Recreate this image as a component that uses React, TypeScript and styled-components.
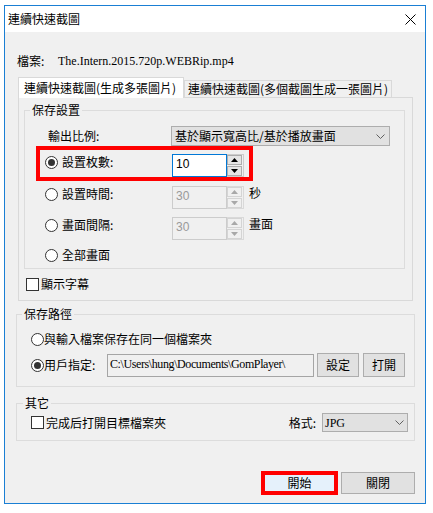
import React from 'react';
import styled, { createGlobalStyle } from 'styled-components';

const CJK = `"Noto Sans CJK TC", "Noto Sans", sans-serif`;
const SERIF = `"Liberation Serif", "Noto Sans CJK TC", serif`;
const SANS = `"Liberation Sans", "Noto Sans CJK TC", sans-serif`;

const Global = createGlobalStyle`
  html, body { margin: 0; padding: 0; background: #ffffff; }
  body { font-family: ${CJK}; font-size: 12px; color: #000; }
  * { box-sizing: border-box; }
`;

const Window = styled.div`
  margin: 5px 0 0 4px;
  width: 422px;
  height: 499px;
  border: 1px solid #1a7fd4;
  display: flex;
  flex-direction: column;
  background: #f0f0f0;
`;

const TitleBar = styled.div`
  height: 26px;
  flex: none;
  background: #ffffff;
  display: flex;
  align-items: center;
  justify-content: space-between;
  padding: 0 9px 0 3px;
`;

const TitleText = styled.span`
  font-size: 12px;
  line-height: 16px;
  color: #000;
`;

const Body = styled.div`
  flex: 1;
  display: flex;
  flex-direction: column;
  padding: 21px 0 9px 0;
`;

const FileRow = styled.div`
  display: flex;
  height: 16px;
  line-height: 16px;
  margin-left: 12px;
`;

const FileLabel = styled.span`
  width: 41px;
`;

const SerifText = styled.span`
  font-family: ${SERIF};
  font-size: 12px;
`;

const TabStrip = styled.div`
  display: flex;
  align-items: flex-end;
  height: 20px;
  margin: 8px 0 0 13px;
  position: relative;
  z-index: 1;
`;

const Tab = styled.div<{ $active?: boolean }>`
  height: ${p => (p.$active ? 21 : 17)}px;
  width: ${p => (p.$active ? 166 : 208)}px;
  margin-bottom: ${p => (p.$active ? -1 : 0)}px;
  border: 1px solid #d9d9d9;
  border-bottom: none;
  background: ${p => (p.$active ? '#ffffff' : '#f0f0f0')};
  padding-left: ${p => (p.$active ? 5 : 3)}px;
  line-height: ${p => (p.$active ? 19 : 15)}px;
  white-space: nowrap;
`;

const Panel = styled.div`
  margin-left: 13px;
  width: 395px;
  height: 204px;
  border: 1px solid #d9d9d9;
  display: flex;
  flex-direction: column;
`;

const Group = styled.fieldset<{ $w: number; $mt: number; $ml: number; $pb: number }>`
  margin: ${p => p.$mt}px 0 0 ${p => p.$ml}px;
  width: ${p => p.$w}px;
  padding: 0 0 ${p => p.$pb}px 0;
  border: 1px solid #dcdcdc;
  min-width: 0;
`;

const Legend = styled.legend<{ $ml: number }>`
  margin-left: ${p => p.$ml}px;
  padding: 0 2px;
  line-height: 16px;
  height: 16px;
  font-size: 12px;
`;

const RatioRow = styled.div`
  display: flex;
  align-items: center;
  height: 20px;
  margin-top: 8px;
  padding-left: 23px;
`;

const RatioLabel = styled.span`
  width: 123px;
  line-height: 16px;
`;

const Combo = styled.div<{ $w: number; $h: number; $pl: number; $pr: number }>`
  width: ${p => p.$w}px;
  height: ${p => p.$h}px;
  border: 1px solid #adadad;
  background: #e1e1e1;
  display: flex;
  align-items: center;
  justify-content: space-between;
  padding: 0 ${p => p.$pr}px 0 ${p => p.$pl}px;
  line-height: 16px;
  white-space: nowrap;
`;

const RadioRow = styled.div<{ $mt: number; $h: number; $hl?: boolean }>`
  display: flex;
  align-items: flex-start;
  width: 209px;
  height: ${p => p.$h}px;
  margin: ${p => p.$mt}px 0 0 15px;
  padding: ${p => (p.$hl ? 4 : 0)}px 0 0 5px;
  outline: ${p => (p.$hl ? '4px solid #ff0000' : 'none')};
  white-space: nowrap;
`;

const RadioLabel = styled.label<{ $w?: number; $gap: number }>`
  display: flex;
  align-items: center;
  height: 16px;
  gap: ${p => p.$gap}px;
  width: ${p => (p.$w ? `${p.$w}px` : 'auto')};
  flex: none;
  line-height: 16px;
`;

const RadioCircle = styled.span<{ $on?: boolean }>`
  width: 13px;
  height: 13px;
  border-radius: 50%;
  border: 1px solid #333333;
  background: #ffffff;
  display: flex;
  align-items: center;
  justify-content: center;
  flex: none;
  &::after {
    content: '';
    width: 7px;
    height: 7px;
    border-radius: 50%;
    background: ${p => (p.$on ? '#333333' : 'transparent')};
  }
`;

const CheckBox = styled.span`
  width: 13px;
  height: 13px;
  border: 1px solid #333333;
  background: #ffffff;
  flex: none;
`;

const Spinner = styled.div`
  display: flex;
  width: 72px;
  height: 23px;
  flex: none;
`;

const SpinInput = styled.div<{ $focus?: boolean }>`
  flex: 1;
  border: 1px solid ${p => (p.$focus ? '#0078d7' : '#cccccc')};
  background: ${p => (p.$focus ? '#ffffff' : '#f0f0f0')};
  color: ${p => (p.$focus ? '#000000' : '#9a9a9a')};
  font-family: ${SANS};
  font-size: 12px;
  line-height: 19px;
  padding-left: 3px;
`;

const SpinButtons = styled.div<{ $focus?: boolean }>`
  width: 17px;
  display: flex;
  flex-direction: column;
  gap: 1px;
  border: 1px solid ${p => (p.$focus ? '#cccccc' : '#d9d9d9')};
  border-left: none;
  padding: 0 1px 0 0;
`;

const SpinButton = styled.div<{ $dis?: boolean }>`
  flex: 1;
  border: 1px solid ${p => (p.$dis ? '#d4d4d4' : '#adadad')};
  background: ${p => (p.$dis ? '#f0f0f0' : '#e5e5e5')};
  display: flex;
  align-items: center;
  justify-content: center;
`;

const Unit = styled.span`
  margin-left: 5px;
  line-height: 14px;
`;

const CheckRow = styled.div<{ $mt: number; $ml: number; $gap: number }>`
  display: flex;
  align-items: center;
  gap: ${p => p.$gap}px;
  height: 16px;
  margin: ${p => p.$mt}px 0 0 ${p => p.$ml}px;
  line-height: 16px;
`;

const PathRow = styled.div<{ $mt: number; $h: number }>`
  display: flex;
  align-items: center;
  height: ${p => p.$h}px;
  margin-top: ${p => p.$mt}px;
  padding-left: 14px;
  white-space: nowrap;
`;

const PathField = styled.div`
  width: 207px;
  height: 23px;
  border: 1px solid #a5a5a5;
  background: #f0f0f0;
  padding-left: 2px;
  line-height: 19px;
  font-family: ${SERIF};
  font-size: 12px;
  letter-spacing: -0.4px;
  white-space: nowrap;
  overflow: hidden;
`;

const Button = styled.button<{ $w: number; $h: number; $ml?: number }>`
  width: ${p => p.$w}px;
  height: ${p => p.$h}px;
  margin-left: ${p => p.$ml ?? 0}px;
  border: 1px solid #adadad;
  background: #e1e1e1;
  font-family: ${CJK};
  font-size: 12px;
  line-height: 16px;
  padding: 0;
  color: #000;
  flex: none;
`;

const PrimaryButton = styled(Button)`
  border: none;
  background: #e5f1fb;
  outline: 4px solid #ff0000;
`;

const OtherRow = styled.div`
  display: flex;
  align-items: center;
  height: 19px;
  margin-top: 2px;
  padding: 0 6px 0 14px;
  line-height: 16px;
`;

const Spacer = styled.div`
  flex: 1;
`;

const FormatLabel = styled.span`
  margin-right: 6px;
`;

const Footer = styled.div`
  margin-top: auto;
  display: flex;
  justify-content: flex-end;
  align-items: center;
  height: 22px;
  padding-right: 10px;
  gap: 7px;
`;

const Chevron = () => (
  <svg width="9" height="5" viewBox="0 0 9 5">
    <polyline points="0.5,0.5 4.5,4.5 8.5,0.5" fill="none" stroke="#606060" strokeWidth="1" />
  </svg>
);

const Arrow = ({ up, dis }: { up?: boolean; dis?: boolean }) => (
  <svg width="7" height="4" viewBox="0 0 7 4">
    <polygon points={up ? '3.5,0 7,4 0,4' : '0,0 7,0 3.5,4'} fill={dis ? '#a8a8a8' : '#000'} />
  </svg>
);

const SpinBox = ({ value, focus }: { value: string; focus?: boolean }) => (
  <Spinner>
    <SpinInput $focus={focus}>{value}</SpinInput>
    <SpinButtons $focus={focus}>
      <SpinButton $dis={!focus}><Arrow up dis={!focus} /></SpinButton>
      <SpinButton $dis={!focus}><Arrow dis={!focus} /></SpinButton>
    </SpinButtons>
  </Spinner>
);

export default function App() {
  return (
    <>
      <Global />
      <Window>
        <TitleBar>
          <TitleText>連續快速截圖</TitleText>
          <svg width="11" height="11" viewBox="0 0 11 11">
            <path d="M0.5 0.5 L10.5 10.5 M10.5 0.5 L0.5 10.5" stroke="#000" strokeWidth="1" />
          </svg>
        </TitleBar>
        <Body>
          <FileRow>
            <FileLabel>檔案:</FileLabel>
            <SerifText>The.Intern.2015.720p.WEBRip.mp4</SerifText>
          </FileRow>
          <TabStrip>
            <Tab $active>連續快速截圖(生成多張圖片)</Tab>
            <Tab>連續快速截圖(多個截圖生成一張圖片)</Tab>
          </TabStrip>
          <Panel>
            <Group $w={381} $mt={4} $ml={5} $pb={5}>
              <Legend $ml={5}>保存設置</Legend>
              <RatioRow>
                <RatioLabel>輸出比例:</RatioLabel>
                <Combo $w={219} $h={20} $pl={3} $pr={4}>
                  <span>基於顯示寬高比/基於播放畫面</span>
                  <Chevron />
                </Combo>
              </RatioRow>
              <RadioRow $mt={4} $h={27} $hl>
                <RadioLabel $w={127} $gap={4}><RadioCircle $on />設置枚數:</RadioLabel>
                <SpinBox value="10" focus />
              </RadioRow>
              <RadioRow $mt={9} $h={23}>
                <RadioLabel $w={127} $gap={4}><RadioCircle />設置時間:</RadioLabel>
                <SpinBox value="30" />
                <Unit>秒</Unit>
              </RadioRow>
              <RadioRow $mt={8} $h={23}>
                <RadioLabel $w={127} $gap={4}><RadioCircle />畫面間隔:</RadioLabel>
                <SpinBox value="30" />
                <Unit>畫面</Unit>
              </RadioRow>
              <RadioRow $mt={7} $h={16}>
                <RadioLabel $gap={4}><RadioCircle />全部畫面</RadioLabel>
              </RadioRow>
            </Group>
            <CheckRow $mt={7} $ml={7} $gap={2}>
              <CheckBox />顯示字幕
            </CheckRow>
          </Panel>
          <Group $w={399} $mt={5} $ml={11} $pb={9}>
            <Legend $ml={5}>保存路徑</Legend>
            <PathRow $mt={9} $h={16}>
              <RadioLabel $gap={0}><RadioCircle />與輸入檔案保存在同一個檔案夾</RadioLabel>
            </PathRow>
            <PathRow $mt={6} $h={24}>
              <RadioLabel $w={76} $gap={0}><RadioCircle $on />用戶指定:</RadioLabel>
              <PathField>C:\Users\hung\Documents\GomPlayer\</PathField>
              <Button $w={42} $h={24} $ml={3}>設定</Button>
              <Button $w={42} $h={24} $ml={4}>打開</Button>
            </PathRow>
          </Group>
          <Group $w={399} $mt={8} $ml={11} $pb={8}>
            <Legend $ml={6}>其它</Legend>
            <OtherRow>
              <CheckRow $mt={0} $ml={0} $gap={2}>
                <CheckBox />完成后打開目標檔案夾
              </CheckRow>
              <Spacer />
              <FormatLabel>格式:</FormatLabel>
              <Combo $w={86} $h={19} $pl={2} $pr={3}>
                <SerifText>JPG</SerifText>
                <Chevron />
              </Combo>
            </OtherRow>
          </Group>
          <Footer>
            <PrimaryButton $w={69} $h={16}>開始</PrimaryButton>
            <Button $w={74} $h={22}>關閉</Button>
          </Footer>
        </Body>
      </Window>
    </>
  );
}
